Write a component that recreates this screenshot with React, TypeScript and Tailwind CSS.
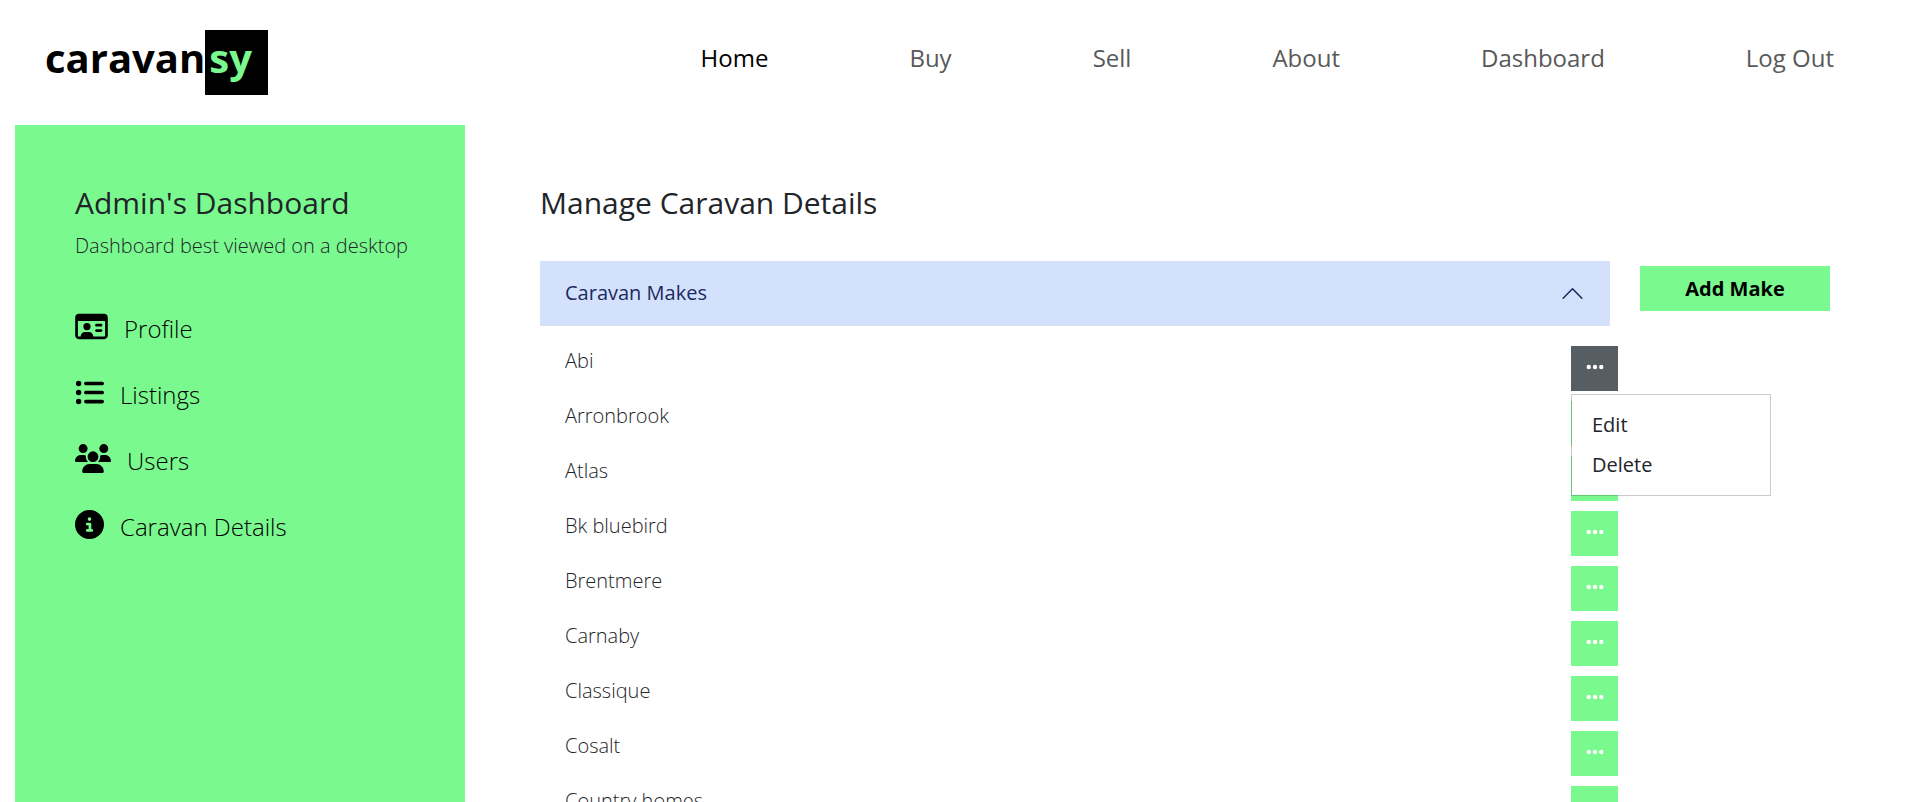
import { useState } from "react";
import { FaEllipsis, FaCircleInfo, FaListUl, FaRegIdCard, FaUsers } from "react-icons/fa6";

const navLinks = ["Home", "Buy", "Sell", "About", "Dashboard", "Log Out"];

const menu = [
  { label: "Profile", Icon: FaRegIdCard, width: "w-[33px]" },
  { label: "Listings", Icon: FaListUl, width: "w-[29px]" },
  { label: "Users", Icon: FaUsers, width: "w-[36px]" },
  { label: "Caravan Details", Icon: FaCircleInfo, width: "w-[29px]" },
];

const makes = ["Abi", "Arronbrook", "Atlas", "Bk bluebird", "Brentmere", "Carnaby", "Classique", "Cosalt", "Country homes"];

function Header() {
  return (
    <header className="flex h-[125px] shrink-0 items-start justify-between pt-[30px] pr-[86px] pl-[45px]">
      <a href="#" className="flex text-[40px] leading-[56px] font-bold text-black">
        <span>caravan</span>
        <span className="h-[65px] bg-black pr-4 pl-1 text-[#7af98f]">sy</span>
      </a>
      <nav className="flex gap-[141px] text-2xl leading-[56px]">
        {navLinks.map((label, i) => (
          <a key={label} href="#" className={i === 0 ? "text-black" : "text-[#595959]"}>
            {label}
          </a>
        ))}
      </nav>
    </header>
  );
}

function Sidebar() {
  return (
    <aside className="w-[450px] shrink-0 bg-[#7af98f] px-[60px] pt-[60px]">
      <h1 className="text-[30px] leading-9 font-medium text-[#212529]">Admin's Dashboard</h1>
      <p className="mt-2.5 text-xl leading-[30px] font-light whitespace-nowrap text-[#212529]">
        Dashboard best viewed on a desktop
      </p>
      <ul className="mt-[50px] flex flex-col gap-[30px]">
        {menu.map(({ label, Icon, width }) => (
          <li key={label}>
            <a href="#" className="flex h-9 gap-4 text-2xl leading-9 font-light text-black">
              <Icon className={`mt-px h-[29px] shrink-0 ${width}`} />
              <span>{label}</span>
            </a>
          </li>
        ))}
      </ul>
    </aside>
  );
}

function MakeRow({ name, open, onToggle }: { name: string; open: boolean; onToggle: () => void }) {
  return (
    <li className="flex h-[45px] justify-between">
      <span className="text-xl leading-[30px] font-light text-[#212529]">{name}</span>
      <div className="relative">
        <button
          type="button"
          aria-label={`Actions for ${name}`}
          aria-expanded={open}
          onClick={onToggle}
          className={`flex h-[45px] w-[47px] justify-center pt-[11px] text-white ${open ? "bg-[#565e64]" : "bg-[#7af98f]"}`}
        >
          <FaEllipsis className="h-5 w-[18px]" />
        </button>
        {open && (
          <div className="absolute top-12 left-0 z-10 flex w-[200px] flex-col border border-black/20 bg-white bg-clip-padding py-2.5 text-xl leading-10 text-[#212529]">
            <button type="button" className="px-5 text-left">Edit</button>
            <button type="button" className="px-5 text-left">Delete</button>
          </div>
        )}
      </div>
    </li>
  );
}

export default function App() {
  const [expanded, setExpanded] = useState(true);
  const [openRow, setOpenRow] = useState<string | null>("Abi");

  return (
    <div className="flex h-screen flex-col overflow-hidden bg-white font-['Open_Sans',sans-serif]">
      <Header />
      <div className="flex min-h-0 flex-1 pl-[15px]">
        <Sidebar />
        <main className="min-w-0 flex-1 pt-[60px] pr-[90px] pl-[75px]">
          <h2 className="text-[30px] leading-9 font-medium text-[#212529]">Manage Caravan Details</h2>
          <div className="mt-10 flex items-start gap-[30px]">
            <section className="min-w-0 flex-1">
              <button
                type="button"
                aria-expanded={expanded}
                onClick={() => setExpanded(!expanded)}
                className="flex h-[65px] w-full items-center justify-between border-b border-[#d8dff0] bg-[#d3e1fc] px-[25px] text-xl text-[#1b2a60]"
              >
                <span>Caravan Makes</span>
                <svg viewBox="0 0 16 16" className="size-[25px]" fill="none" stroke="currentColor" strokeLinecap="round" strokeLinejoin="round">
                  <path d="M2 11l6-6 6 6" />
                </svg>
              </button>
              {expanded && (
                <ul className="mr-[-8px] flex flex-col gap-2.5 pt-5 pl-[25px]">
                  {makes.map((name) => (
                    <MakeRow
                      key={name}
                      name={name}
                      open={openRow === name}
                      onToggle={() => setOpenRow(openRow === name ? null : name)}
                    />
                  ))}
                </ul>
              )}
            </section>
            <button type="button" className="mt-[5px] h-[45px] w-[190px] bg-[#7af98f] text-xl font-bold text-black">
              Add Make
            </button>
          </div>
        </main>
      </div>
    </div>
  );
}
